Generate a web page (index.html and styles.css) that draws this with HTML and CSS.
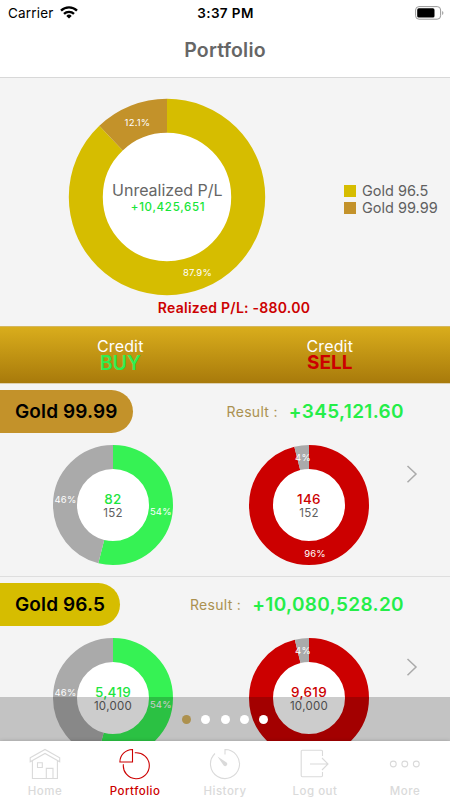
FILE: index.html
```html
<!DOCTYPE html>
<html lang="en">
<head>
<meta charset="utf-8">
<title>Portfolio</title>
<link rel="stylesheet" href="styles.css">
</head>
<body>
<div class="app">
  <header class="top">
    <div class="status">
      <div class="carrier"><span>Carrier</span>
        <svg class="wifi" width="18" height="13" viewBox="0 0 18 13"><g fill="none" stroke="#000" stroke-width="2.3"><path d="M1 4.6a11.3 11.3 0 0 1 16 0"/><path d="M4 7.9a7 7 0 0 1 10 0"/></g><path d="M9 12.6 6.3 9.9a3.9 3.9 0 0 1 5.4 0z"/></svg>
      </div>
      <div class="clock">3:37 PM</div>
      <svg class="battery" width="29" height="14" viewBox="0 0 29 14"><rect x=".6" y=".6" width="25" height="12.6" rx="3.4" fill="#fff" stroke="#999"/><rect x="2.2" y="2.3" width="17.3" height="9.2" rx="1.6"/><path d="M27.2 5v4q1.2-.6 1.2-2t-1.2-2z" fill="#999"/></svg>
    </div>
    <h1 class="title">Portfolio</h1>
  </header>

  <main class="content">
    <section class="summary">
      <svg class="donut-main" width="198" height="198" viewBox="-99 -99 198 198">
        <circle r="65" fill="#fff"/>
        <g class="ring ring-main"><circle r="81.2" pathLength="1000" stroke="#d6bd00" stroke-dasharray="879 121"/><circle r="81.2" pathLength="1000" stroke="#c3922a" stroke-dasharray="121 879" stroke-dashoffset="-879"/></g>
        <text class="slice" x="-29.500" y="-71.5">12.1%</text>
        <text class="slice" x="30.500" y="79">87.9%</text>
        <text class="main-label" x="0.300" y="-1">Unrealized P/L</text>
        <text class="main-value" x="1" y="13.800">+10,425,651</text>
      </svg>
      <ul class="legend">
        <li><i class="swatch yellow"></i>Gold 96.5</li>
        <li><i class="swatch bronze"></i>Gold 99.99</li>
      </ul>
      <p class="realized">Realized P/L: -880.00</p>
    </section>

    <section class="credits">
      <div class="credit"><span>Credit</span><b class="buy">BUY</b></div>
      <div class="credit"><span>Credit</span><b class="sell">SELL</b></div>
    </section>

    <section class="asset">
      <div class="asset-head">
        <h2 class="pill bronze">Gold 99.99</h2>
        <p class="result"><span>Result :</span><b>+345,121.60</b></p>
      </div>
      <div class="charts">
        <svg class="donut" width="122" height="122" viewBox="-61 -61 122 122">
          <circle r="37" fill="#fff"/>
          <g class="ring"><circle r="48" pathLength="1000" stroke="#36f254" stroke-dasharray="539.5 460.5"/><circle r="48" pathLength="1000" stroke="#aaa" stroke-dasharray="460.5 539.5" stroke-dashoffset="-539.5"/></g>
          <text class="slice" x="-47.500" y="-2.5">46%</text><text class="slice" x="47.800" y="9.5">54%</text>
          <text class="count green" x="0" y="-1">82</text><text class="total" x="0" y="12">152</text>
        </svg>
        <svg class="donut" width="122" height="122" viewBox="-61 -61 122 122">
          <circle r="37" fill="#fff"/>
          <g class="ring"><circle r="48" pathLength="1000" stroke="#c00" stroke-dasharray="960.5 39.5"/><circle r="48" pathLength="1000" stroke="#aaa" stroke-dasharray="39.5 960.5" stroke-dashoffset="-960.5"/></g>
          <text class="slice" x="-6" y="-44">4%</text><text class="slice" x="6" y="51.5">96%</text>
          <text class="count red" x="0" y="-1">146</text><text class="total" x="0" y="12">152</text>
        </svg>
        <svg class="chevron" width="12" height="18" viewBox="0 0 12 18"><path d="M1.5 1 10 9l-8.500 8.200"/></svg>
      </div>
    </section>

    <section class="asset">
      <div class="asset-head">
        <h2 class="pill yellow">Gold 96.5</h2>
        <p class="result"><span>Result :</span><b>+10,080,528.20</b></p>
      </div>
      <div class="charts">
        <svg class="donut" width="122" height="122" viewBox="-61 -61 122 122">
          <circle r="37" fill="#fff"/>
          <g class="ring"><circle r="48" pathLength="1000" stroke="#36f254" stroke-dasharray="541.9 458.1"/><circle r="48" pathLength="1000" stroke="#aaa" stroke-dasharray="458.1 541.9" stroke-dashoffset="-541.9"/></g>
          <text class="slice" x="-47.500" y="-2.5">46%</text><text class="slice" x="47.800" y="9.500">54%</text>
          <text class="count green" x="0" y="-1">5,419</text><text class="total" x="0" y="12">10,000</text>
        </svg>
        <svg class="donut" width="122" height="122" viewBox="-61 -61 122 122">
          <circle r="37" fill="#fff"/>
          <g class="ring"><circle r="48" pathLength="1000" stroke="#c00" stroke-dasharray="961.9 38.1"/><circle r="48" pathLength="1000" stroke="#aaa" stroke-dasharray="38.1 961.9" stroke-dashoffset="-961.9"/></g>
          <text class="slice" x="-6" y="-44">4%</text><text class="slice" x="6" y="51.5">96%</text>
          <text class="count red" x="0" y="-1">9,619</text><text class="total" x="0" y="12">10,000</text>
        </svg>
        <svg class="chevron" width="12" height="18" viewBox="0 0 12 18"><path d="M1.5 1 10 9l-8.500 8.200"/></svg>
      </div>
    </section>

    <div class="pager"><i class="on"></i><i></i><i></i><i></i><i></i></div>
  </main>

  <nav class="tabs">
    <a class="tab"><svg width="32" height="32" viewBox="0 0 32 32"><path d="M3.400 12.500V30.500h25V12.500M1.200 9.800 16 1.500l14.700 8.300v4L16 5.500 1.200 13.800zM17.300 30V20.400h6.700V30M8.500 14.700h4.800v4.800H8.500z"/></svg>Home</a>
    <a class="tab active"><svg width="32" height="32" viewBox="0 0 32 32"><path d="M13.500 1.500A12.700 12.500 0 0 0 .9 14H13.500zM15.800 4.800A13 13 0 1 1 4.400 16.200"/></svg>Portfolio</a>
    <a class="tab"><svg width="32" height="32" viewBox="0 0 32 32"><path d="M16 6.500V1.500A14.500 14.500 0 1 1 6 5.500"/><path class="solid" d="M8.500 8.500 17.600 14.600a1.900 1.900 0 1 1-2.900 2.900z"/></svg>History</a>
    <a class="tab"><svg width="32" height="32" viewBox="0 0 32 32"><path d="M23.500 8V3.500q0-1.200-1.200-1.200H3.400Q2.200 2.300 2.200 3.500v24q0 1.200 1.200 1.200h18.900q1.200 0 1.200-1.200V24M11 16H29M23 10l6 6-6 6"/></svg>Log out</a>
    <a class="tab"><svg width="32" height="32" viewBox="0 0 32 32"><circle cx="4.300" cy="16" r="2.900"/><circle cx="15.800" cy="16" r="2.900"/><circle cx="27.300" cy="16" r="2.900"/></svg>More</a>
  </nav>
</div>
</body>
</html>
```
FILE: styles.css
```css
* { box-sizing: border-box; margin: 0; padding: 0; }
body { font-family: Inter, "Liberation Sans", sans-serif; color: #606060; }
.app { width: 450px; height: 800px; display: flex; flex-direction: column; overflow: hidden; background: #f4f4f4; }

.top { height: 78px; background: #fff; border-bottom: 1px solid #d8d8d8; flex: none; }
.status { height: 25px; display: grid; grid-template-columns: 1fr auto 1fr; align-items: center; padding: 0 6px 0 8px; color: #000; font-size: 13.5px; }
.carrier { display: flex; align-items: center; gap: 6px; letter-spacing: .2px; }
.clock { font-weight: 600; letter-spacing: .4px; margin-right: 1px; }
.battery { justify-self: end; }
.title { text-align: center; font-size: 19.500px; line-height: 51px; font-weight: 600; letter-spacing: .2px; color: #666; }

.content { flex: 1; min-height: 0; position: relative; overflow: hidden; }
.summary { height: 248px; display: grid; grid-template: 220px 1fr / 335px 1fr; }
.donut-main { margin: 20px 0 0 68px; }
.ring circle { fill: none; stroke-width: 24px; }
.ring { transform: rotate(-90deg); }
.ring-main circle { stroke-width: 34px; }
text { text-anchor: middle; }
.slice { font-size: 9.500px; fill: #fff; letter-spacing: .2px; }
.main-label { font-size: 16px; fill: #666; }
.main-value { font-size: 11.500px; font-weight: 500; letter-spacing: .7px; fill: #17e538; }
.legend { list-style: none; margin: 104px 0 0 9px; font-size: 14.500px; line-height: 17px; color: #606060; white-space: nowrap; }
.legend li { display: flex; align-items: center; gap: 6px; }
.swatch { width: 12px; height: 12px; }
.yellow { background: #d6bd00; }
.bronze { background: #c3922a; }
.realized { grid-column: 1 / 3; text-align: center; color: #c00; font-weight: 600; font-size: 14px; line-height: 20px; letter-spacing: .25px; padding-left: 18px; }

.credits { height: 58px; background: linear-gradient(#d9ad1c, #a87a0b); border-top: 1px solid #d4b75d; border-bottom: 1px solid #ddd0b0; display: flex; padding: 11px 15.500px 0; }
.credit { flex: 1; display: flex; flex-direction: column; align-items: center; color: #fff; font-size: 16px; line-height: 16px; letter-spacing: .15px; }
.credit b { font-size: 19.500px; font-weight: 600; line-height: 18px; letter-spacing: 0; }
.buy { color: #30ee50; }
.credit .sell { color: #c00; font-weight: 700; font-size: 19px; }

.asset { height: 193px; padding-top: 6px; border-bottom: 1px solid #dedede; }
.asset-head { display: flex; justify-content: space-between; align-items: center; padding-right: 46px; height: 43px; }
.pill { height: 43px; line-height: 43px; padding: 0 15px; border-radius: 0 22px 22px 0; color: #000; font-size: 19px; font-weight: 600; letter-spacing: .12px; }
.result { display: flex; align-items: center; gap: 11px; color: #ab9150; font-size: 14px; letter-spacing: .3px; }
.result b { color: #25ee49; font-size: 19px; font-weight: 600; letter-spacing: .35px; }
.charts { display: flex; padding: 11px 0 0 52px; }
.donut + .donut { margin-left: 74px; }
.count { font-size: 13.500px; font-weight: 500; letter-spacing: .3px; }
.total { font-size: 11.500px; fill: #606060; letter-spacing: .3px; }
.green { fill: #1ee53f; }
.red { fill: #c00; }
.chevron { margin: 21px 0 0 36px; fill: none; stroke: #aaa; stroke-width: 1.500px; }

.pager { position: absolute; left: 0; right: 0; bottom: 0; height: 44px; background: rgba(0,0,0,.2); display: flex; justify-content: center; align-items: center; gap: 10.300px; }
.pager i { width: 9px; height: 9px; border-radius: 50%; background: #fff; }
.pager .on { background: #ad914e; }

.tabs { height: 59px; flex: none; background: #fff; display: flex; position: relative; box-shadow: 0 0 4px rgba(0,0,0,.2); }
.tab { flex: 1; display: flex; flex-direction: column; align-items: center; padding-top: 7px; color: #dadada; font-size: 11.500px; line-height: 14px; font-weight: 500; letter-spacing: .5px; gap: 4px; }
.tab svg { fill: none; stroke: currentColor; stroke-width: 1.100px; }
.tab .solid { fill: currentColor; stroke: none; }
.tab.active { color: #c00; }
```
